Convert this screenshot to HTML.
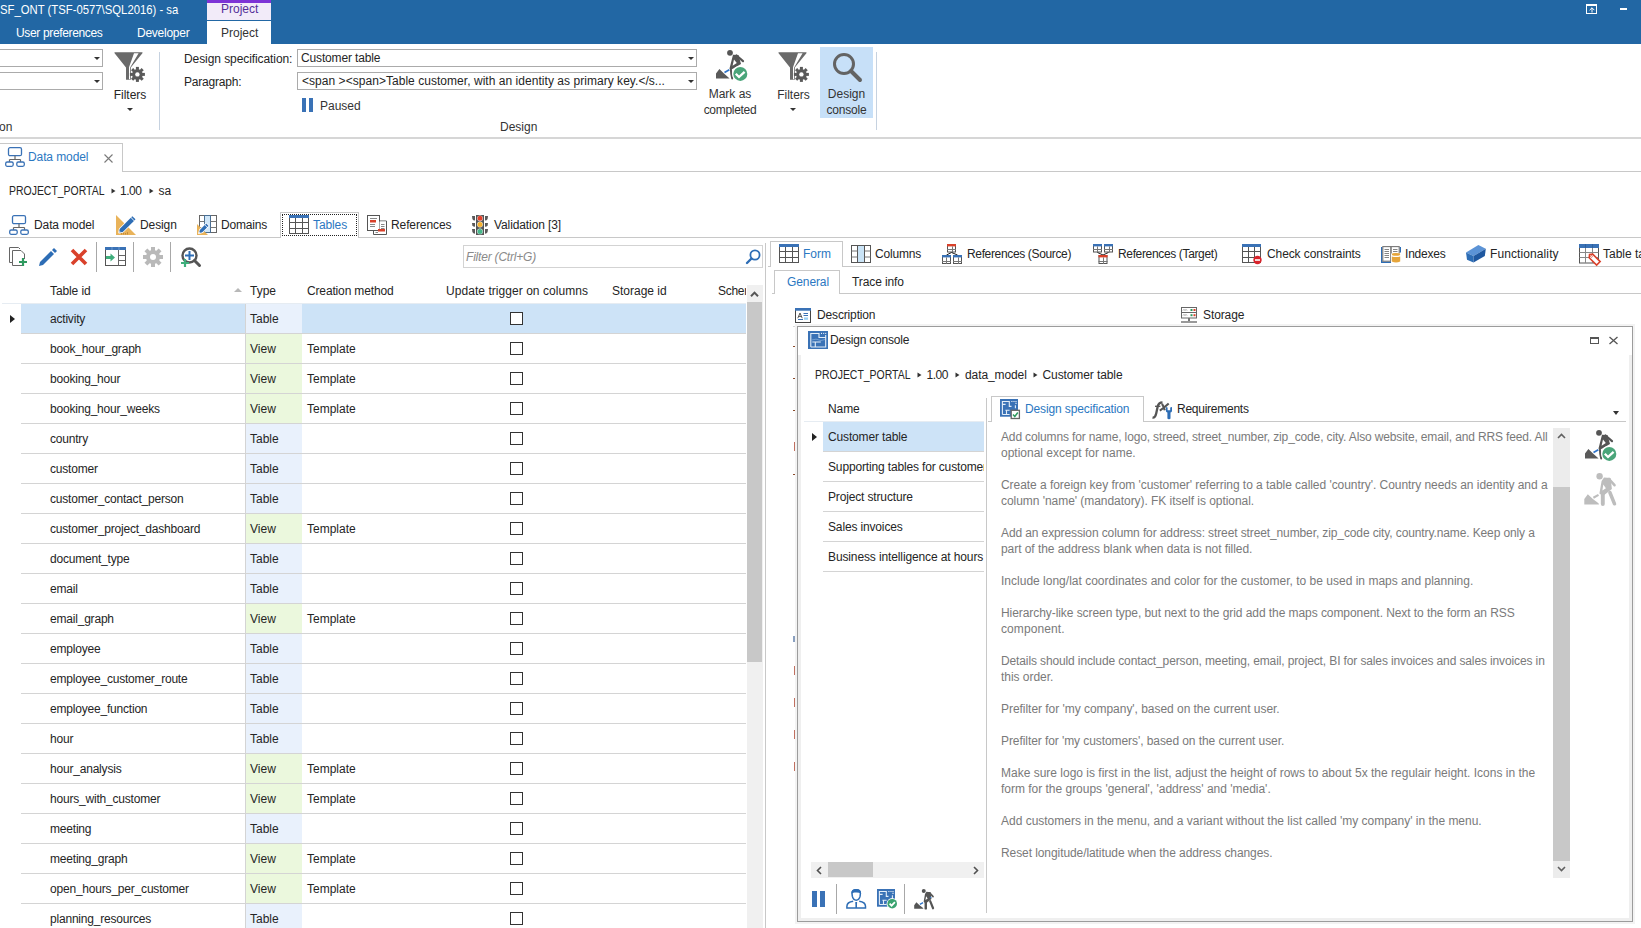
<!DOCTYPE html>
<html><head><meta charset="utf-8">
<style>
*{box-sizing:border-box}
html,body{margin:0;padding:0}
body{width:1641px;height:928px;overflow:hidden;position:relative;background:#fff;font-family:"Liberation Sans",sans-serif;font-size:12px;color:#252525}
.a{position:absolute}
.t{position:absolute;white-space:nowrap;line-height:18px;height:18px}
.hl{position:absolute;height:1px;background:#d4d4d4}
.vl{position:absolute;width:1px;background:#d4d4d4}
.combo{position:absolute;border:1px solid #ababab;background:#fff}
.dd{position:absolute;width:0;height:0;border-left:3px solid transparent;border-right:3px solid transparent;border-top:3.5px solid #333}
svg{position:absolute;overflow:visible}
</style></head><body>

<!-- ===== Title bar ===== -->
<div class="a" style="left:0;top:0;width:1641px;height:44px;background:#2267a4"></div>
<div class="t" style="left:0;top:1px;color:#fff;font-size:13px;transform:scaleX(0.87);transform-origin:0 0">SF_ONT (TSF-0577\SQL2016) - sa</div>
<div class="a" style="left:207px;top:0;width:64px;height:20px;background:#f2ebf9;border-top:3.6px solid #7d33d6"></div>
<div class="t" style="left:221px;top:0px;color:#55309a">Project</div>
<div class="t" style="left:16px;top:24px;color:#fff;letter-spacing:-0.35px">User preferences</div>
<div class="t" style="left:137px;top:24px;color:#fff;letter-spacing:-0.25px">Developer</div>
<div class="a" style="left:207px;top:21px;width:64px;height:23px;background:#fff"></div>
<div class="t" style="left:221px;top:24px;color:#333">Project</div>
<!-- window icons -->
<div class="a" style="left:1586px;top:4px;width:11px;height:10px;border:1px solid #fff;border-top-width:2px"></div>
<svg style="left:1586px;top:4px" width="12" height="11" viewBox="0 0 12 11"><path d="M6 3.8 V8.5 M3.6 6.2 L6 3.8 L8.4 6.2" stroke="#fff" stroke-width="1" fill="none"/></svg>
<div class="a" style="left:1620px;top:8px;width:7px;height:2px;background:#fff"></div>

<!-- ===== Ribbon ===== -->
<div class="combo" style="left:-2px;top:49px;width:105px;height:18px"></div>
<div class="dd" style="left:94px;top:57px"></div>
<div class="combo" style="left:-2px;top:72px;width:105px;height:18px"></div>
<div class="dd" style="left:94px;top:80px"></div>
<!-- filters icon 1 -->
<svg style="left:114px;top:52px" width="32" height="30" viewBox="0 0 32 30">
 <path d="M0.8 0.2 H28.2 Q29 0.5 28.4 1.3 L16.8 15.6 V27.7 H12 V15.6 L0.6 1.3 Q0 0.5 0.8 0.2 Z" fill="#6a6a6a"/>
 <path d="M20 1.2 H24.6 L16 15.8 V27.2 H15 V15.2 Z" fill="#fff"/>
 <g transform="translate(23.4,22.4)"><circle r="5.3" fill="#5a5a5a"/><circle r="2.2" fill="#fff"/>
 <g fill="#5a5a5a"><rect x="-1.5" y="-7.5" width="3" height="3"/><rect x="-1.5" y="4.5" width="3" height="3"/><rect x="-7.5" y="-1.5" width="3" height="3"/><rect x="4.5" y="-1.5" width="3" height="3"/>
 <g transform="rotate(45)"><rect x="-1.5" y="-7.5" width="3" height="3"/><rect x="-1.5" y="4.5" width="3" height="3"/><rect x="-7.5" y="-1.5" width="3" height="3"/><rect x="4.5" y="-1.5" width="3" height="3"/></g></g></g>
</svg>
<div class="t" style="left:112px;top:86px;width:36px;text-align:center">Filters</div>
<div class="dd" style="left:126.5px;top:108px"></div>
<div class="t" style="left:-1px;top:118px;color:#333">on</div>
<div class="a" style="left:159px;top:52px;width:1px;height:78px;background:#c6d2e0"></div>

<div class="t" style="left:184px;top:50px;letter-spacing:-0.08px">Design specification:</div>
<div class="t" style="left:184px;top:73px;letter-spacing:-0.2px">Paragraph:</div>
<div class="combo" style="left:297px;top:49px;width:400px;height:18px"></div>
<div class="t" style="left:301px;top:49px;letter-spacing:-0.15px">Customer table</div>
<div class="dd" style="left:687.5px;top:57px"></div>
<div class="combo" style="left:297px;top:72px;width:400px;height:18px"></div>
<div class="t" style="left:302px;top:72px;letter-spacing:0.04px">&lt;span &gt;&lt;span&gt;Table customer, with an identity as primary key.&lt;/s...</div>
<div class="dd" style="left:687.5px;top:80px"></div>
<div class="a" style="left:302px;top:98px;width:4px;height:14px;background:#3a72b6"></div>
<div class="a" style="left:309px;top:98px;width:4px;height:14px;background:#3a72b6"></div>
<div class="t" style="left:320px;top:97px;color:#333">Paused</div>
<div class="t" style="left:500px;top:118px;color:#333">Design</div>

<!-- Mark as completed -->
<svg id="worker1" style="left:715px;top:50px" width="32" height="31" viewBox="0 0 32 31">
 <circle cx="15" cy="2.8" r="2.9" fill="#555"/>
 <path d="M21.5 5.5 L28 11.2" stroke="#555" stroke-width="2.2" stroke-linecap="round"/>
 <path d="M18 4.8 L23.5 5 L26 14 L16.5 19.5 L14.5 18.5 Z M19 9.5 L21.8 13 L17.6 15.8 Z" fill="#555" fill-rule="evenodd"/>
 <path d="M15.8 18.5 Q16 24 17.2 28.6" stroke="#555" stroke-width="2" fill="none" stroke-linecap="round"/>
 <path d="M1 28.6 L1 23.5 L4.4 19 L9 23.6 L14.6 28.6 Z" fill="#5a5a5a"/>
 <path d="M9.5 22.5 L14.3 19.8" stroke="#2f74c9" stroke-width="1.8"/>
 <circle cx="25.3" cy="23.9" r="8.2" fill="#fff"/>
 <circle cx="25.3" cy="23.9" r="7" fill="#4aa57a"/>
 <path d="M20.8 23.8 L24 27 L29.6 21.8" stroke="#fff" stroke-width="2.3" fill="none"/>
</svg>
<div class="t" style="left:700px;top:85px;width:60px;text-align:center;color:#333">Mark as</div>
<div class="t" style="left:697px;top:101px;width:66px;text-align:center;color:#333;letter-spacing:-0.3px">completed</div>
<!-- Filters 2 -->
<svg style="left:778px;top:52px" width="32" height="30" viewBox="0 0 32 30">
 <path d="M0.8 0.2 H28.2 Q29 0.5 28.4 1.3 L16.8 15.6 V27.7 H12 V15.6 L0.6 1.3 Q0 0.5 0.8 0.2 Z" fill="#6a6a6a"/>
 <path d="M20 1.2 H24.6 L16 15.8 V27.2 H15 V15.2 Z" fill="#fff"/>
 <g transform="translate(23.4,22.4)"><circle r="5.3" fill="#5a5a5a"/><circle r="2.2" fill="#fff"/>
 <g fill="#5a5a5a"><rect x="-1.5" y="-7.5" width="3" height="3"/><rect x="-1.5" y="4.5" width="3" height="3"/><rect x="-7.5" y="-1.5" width="3" height="3"/><rect x="4.5" y="-1.5" width="3" height="3"/>
 <g transform="rotate(45)"><rect x="-1.5" y="-7.5" width="3" height="3"/><rect x="-1.5" y="4.5" width="3" height="3"/><rect x="-7.5" y="-1.5" width="3" height="3"/><rect x="4.5" y="-1.5" width="3" height="3"/></g></g></g>
</svg>
<div class="t" style="left:775px;top:86px;width:37px;text-align:center;color:#333">Filters</div>
<div class="dd" style="left:790px;top:108px"></div>
<!-- Design console -->
<div class="a" style="left:820px;top:47px;width:53px;height:71px;background:#c7e0f8"></div>
<svg style="left:832px;top:52px" width="30" height="30" viewBox="0 0 30 30">
 <circle cx="12" cy="12" r="9.5" stroke="#636363" stroke-width="3" fill="none"/>
 <path d="M19 19 L28 28" stroke="#636363" stroke-width="4" stroke-linecap="round"/>
</svg>
<div class="t" style="left:820px;top:85px;width:53px;text-align:center;color:#333">Design</div>
<div class="t" style="left:820px;top:101px;width:53px;text-align:center;color:#333;letter-spacing:-0.2px">console</div>
<div class="a" style="left:876px;top:52px;width:1px;height:78px;background:#c6d2e0"></div>

<div class="a" style="left:0;top:137px;width:1641px;height:2px;background:#d6d6d6"></div>

<!-- ===== Document tab ===== -->
<div class="a" style="left:-1px;top:143px;width:124px;height:29px;border:1px solid #c8c8c8;border-bottom:none;background:#fff"></div>
<div class="hl" style="left:122px;top:171px;width:1519px;background:#c8c8c8"></div>
<svg style="left:5px;top:147px" width="20" height="20" viewBox="0 0 20 20">
 <g fill="none" stroke="#3a72b6" stroke-width="1.3">
 <rect x="3.5" y="0.7" width="13" height="8" rx="1.5"/>
 <path d="M10 8.7 V12.5 M4.5 12.5 H15.5 M4.5 12.5 V15 M15.5 12.5 V15" stroke="#666" stroke-width="1.2"/>
 <rect x="0.7" y="15" width="7.5" height="4.3" rx="1.5"/>
 <rect x="11.8" y="15" width="7.5" height="4.3" rx="1.5"/>
 </g>
</svg>
<div class="t" style="left:28px;top:148px;color:#2b78c2;letter-spacing:-0.1px">Data model</div>
<svg style="left:104px;top:154px" width="9" height="9" viewBox="0 0 9 9"><path d="M0.5 0.5 L8.5 8.5 M8.5 0.5 L0.5 8.5" stroke="#7a7a7a" stroke-width="1.1"/></svg>

<!-- breadcrumb -->
<div class="t" style="left:9px;top:182px;transform:scaleX(0.871);transform-origin:0 0">PROJECT_PORTAL</div><svg style="left:111px;top:188px" width="5" height="6" viewBox="0 0 5 6"><path d="M0.5 0.5 L4.5 3 L0.5 5.5 Z" fill="#333"/></svg><div class="t" style="left:120px;top:182px;letter-spacing:-0.5px">1.00</div><svg style="left:149px;top:188px" width="5" height="6" viewBox="0 0 5 6"><path d="M0.5 0.5 L4.5 3 L0.5 5.5 Z" fill="#333"/></svg><div class="t" style="left:158.5px;top:182px">sa</div>

<!-- ===== Tab bar ===== -->
<div class="hl" style="left:0;top:237px;width:765px;background:#c8c8c8"></div>
<div class="hl" style="left:765px;top:237px;width:876px;background:#c8c8c8"></div>
<svg style="left:9px;top:215px" width="20" height="20" viewBox="0 0 20 20">
 <g fill="none" stroke="#3a72b6" stroke-width="1.3">
 <rect x="3.5" y="0.7" width="13" height="8" rx="1.5"/>
 <path d="M10 8.7 V12.5 M4.5 12.5 H15.5 M4.5 12.5 V15 M15.5 12.5 V15" stroke="#666" stroke-width="1.2"/>
 <rect x="0.7" y="15" width="7.5" height="4.3" rx="1.5"/>
 <rect x="11.8" y="15" width="7.5" height="4.3" rx="1.5"/>
 </g>
</svg>
<div class="t" style="left:34px;top:216px;letter-spacing:-0.1px">Data model</div>
<svg style="left:116px;top:215px" width="20" height="20" viewBox="0 0 20 20">
 <path d="M0 0 L20 20 H0 Z" fill="#e9b35a"/>
 <path d="M5.5 19.5 V18 M7.5 19.5 V17.2 M9.5 19.5 V18 M11.5 19.5 V17.2" stroke="#b98032" stroke-width="0.8"/>
 <g transform="translate(10.5 10.2) rotate(-45)"><path d="M-7.5 -2.2 H8.3 V2.2 H-7.5 L-10.5 0 Z M8.9 -2.2 H10.5 V2.2 H8.9 Z" fill="none" stroke="#fff" stroke-width="1.6" stroke-linejoin="round"/><path d="M-7.5 -2.2 H8.3 V2.2 H-7.5 L-10.5 0 Z" fill="#2d6db5"/><path d="M8.9 -2.2 H10.5 V2.2 H8.9 Z" fill="#2d6db5"/><path d="M-10.5 0 L-9.0 -0.7 V0.7 Z" fill="#fff"/></g>
</svg>
<div class="t" style="left:140px;top:216px;letter-spacing:-0.1px">Design</div>
<svg style="left:197px;top:215px" width="21" height="20" viewBox="0 0 21 20">
 <rect x="2.5" y="0.5" width="17" height="17" fill="#fff" stroke="#666"/>
 <rect x="7.5" y="0.5" width="6" height="17" fill="#cfe6f8" stroke="#4a6f94"/>
 <path d="M2.5 6.5 H7.5 M2.5 12.5 H7.5 M13.5 6.5 H19.5 M13.5 12.5 H19.5" stroke="#777"/>
 <path d="M0 9 L11 20 H0 Z" fill="#e9b35a"/>
 <g transform="translate(6.2 14) rotate(-45)"><path d="M-3.0 -1.7 H3.8 V1.7 H-3.0 L-6.0 0 Z M4.4 -1.7 H6.0 V1.7 H4.4 Z" fill="none" stroke="#fff" stroke-width="1.6" stroke-linejoin="round"/><path d="M-3.0 -1.7 H3.8 V1.7 H-3.0 L-6.0 0 Z" fill="#2d6db5"/><path d="M4.4 -1.7 H6.0 V1.7 H4.4 Z" fill="#2d6db5"/><path d="M-6.0 0 L-4.5 -0.7 V0.7 Z" fill="#fff"/></g>
</svg>
<div class="t" style="left:221px;top:216px;letter-spacing:-0.2px">Domains</div>
<!-- Tables selected tab -->
<div class="a" style="left:280px;top:212px;width:79px;height:26px;border:1px solid #c8c8c8;border-bottom:none;background:#fff"></div>
<div class="a" style="left:282px;top:214px;width:75px;height:22px;border:1px dotted #222"></div>
<svg style="left:289px;top:215px" width="20" height="19" viewBox="0 0 20 19">
 <rect x="0.5" y="0.5" width="19" height="18" fill="#fff" stroke="#555"/>
 <rect x="0" y="0" width="20" height="3" fill="#3a72b6"/>
 <path d="M0.5 7.5 H19.5 M0.5 13.5 H19.5 M6.5 3 V18.5 M13.5 3 V18.5" stroke="#555"/>
</svg>
<div class="t" style="left:313px;top:216px;color:#2b78c2;letter-spacing:-0.1px">Tables</div>
<svg style="left:367px;top:215px" width="21" height="20" viewBox="0 0 21 20">
 <rect x="0.5" y="0.5" width="12" height="15" fill="#fff" stroke="#555"/>
 <path d="M3 3.5 H10 M3 9.5 H8 M3 11.5 H8" stroke="#888"/>
 <rect x="3" y="5" width="6" height="2.5" fill="#d9412b"/>
 <path d="M6.5 16 V19.5 H19.5 V6 H12.5" stroke="#555" fill="none"/>
 <rect x="12.5" y="6.5" width="6.5" height="12.5" fill="#fff"/>
 <path d="M14 9.5 H17.5 M14 11.5 H17.5 M14 13.5 H17.5" stroke="#888"/>
 <rect x="11" y="14" width="7" height="2.5" fill="#d9412b"/>
 <path d="M8.5 17.5 H11" stroke="#888"/>
</svg>
<div class="t" style="left:391px;top:216px;letter-spacing:-0.1px">References</div>
<svg style="left:472px;top:215px" width="16" height="20" viewBox="0 0 16 20">
 <rect x="4" y="0" width="8" height="20" fill="#555"/>
 <g fill="#5a5a5a"><path d="M0 1 H3 V5.6 Q1 5.6 0.4 4 Z"/><path d="M0 8 H3 V11.8 Q1 11.8 0.4 10.5 Z"/><path d="M0 14 H3 V18.8 Q1 18.8 0.4 17 Z"/>
 <path d="M16 1 H13 V5.6 Q15 5.6 15.6 4 Z"/><path d="M16 8 H13 V11.8 Q15 11.8 15.6 10.5 Z"/><path d="M16 14 H13 V18.8 Q15 18.8 15.6 17 Z"/></g>
 <circle cx="8" cy="3.3" r="2.9" fill="#eef3f3"/><circle cx="8" cy="3.3" r="2.5" fill="#e0432e"/>
 <circle cx="8" cy="9.5" r="2.9" fill="#eef3f3"/><circle cx="8" cy="9.5" r="2.5" fill="#f6b12f"/>
 <circle cx="8" cy="16.4" r="2.9" fill="#eef3f3"/><circle cx="8" cy="16.4" r="2.5" fill="#48b88b"/>
</svg>
<div class="t" style="left:494px;top:216px;letter-spacing:-0.1px">Validation [3]</div>

<!-- ===== Toolbar ===== -->
<svg style="left:9px;top:247px" width="18" height="19" viewBox="0 0 18 19">
 <path d="M3.5 3.5 V18.5 H13 M0.5 0.5 H9.5 L11 2" stroke="#666" fill="none"/>
 <path d="M0.5 0.5 V15.5 H3.5" stroke="#666" fill="none"/>
 <path d="M3.5 3.5 H12 L15.5 7 V12" stroke="#666" fill="none"/>
 <path d="M14 11 V19 M10 15 H18" stroke="#2e9a5f" stroke-width="2.2"/>
</svg>
<svg style="left:39px;top:248px" width="18" height="18" viewBox="0 0 18 18">
 <path d="M0 18 L1 14 L12 3 L15 6 L4 17 Z" fill="#2d6db5"/>
 <path d="M13 2 L15 0 L18 3 L16 5 Z" fill="#2d6db5"/>
</svg>
<svg style="left:70px;top:248px" width="18" height="18" viewBox="0 0 18 18">
 <path d="M2 2 L16 16 M16 2 L2 16" stroke="#d9412b" stroke-width="3.6"/>
</svg>
<div class="vl" style="left:96px;top:242px;height:30px;background:#a8a8a8"></div>
<svg style="left:105px;top:247px" width="21" height="19" viewBox="0 0 21 19">
 <rect x="0.5" y="0.5" width="20" height="18" fill="#fff" stroke="#555"/>
 <rect x="0" y="0" width="21" height="3" fill="#3a72b6"/>
 <path d="M7 0 V3 M14 0 V3" stroke="#7aa3d6" stroke-width="0.8"/>
 <path d="M13.5 8.5 H20.5 M13.5 13.5 H20.5 M13.5 3 V18.5" stroke="#666"/>
 <path d="M1 9 H5.5 V6.5 L10 10.5 L5.5 14.5 V12 H1 Z" fill="#3fae7c"/>
</svg>
<div class="vl" style="left:133px;top:242px;height:30px;background:#a8a8a8"></div>
<svg style="left:143px;top:247px" width="20" height="20" viewBox="-10 -10 20 20">
 <circle r="7" fill="#b9b9b9"/><circle r="3" fill="#fff"/>
 <g fill="#b9b9b9"><rect x="-2" y="-10" width="4" height="4"/><rect x="-2" y="6" width="4" height="4"/><rect x="-10" y="-2" width="4" height="4"/><rect x="6" y="-2" width="4" height="4"/>
 <g transform="rotate(45)"><rect x="-2" y="-10" width="4" height="4"/><rect x="-2" y="6" width="4" height="4"/><rect x="-10" y="-2" width="4" height="4"/><rect x="6" y="-2" width="4" height="4"/></g></g>
</svg>
<div class="vl" style="left:170px;top:242px;height:30px;background:#a8a8a8"></div>
<svg style="left:180px;top:247px" width="21" height="20" viewBox="0 0 21 20">
 <circle cx="9.5" cy="8.5" r="7" fill="none" stroke="#555" stroke-width="2.4"/>
 <path d="M14.5 13.5 L19.5 18.5" stroke="#555" stroke-width="3" stroke-linecap="round"/>
 <path d="M9.5 4 V13 M5 8.5 H14" stroke="#2d6db5" stroke-width="2"/>
 <path d="M5 12 V20 M1 16 H9" stroke="#3fae7c" stroke-width="2.2"/>
</svg>
<!-- filter box -->
<div class="a" style="left:463px;top:245px;width:300px;height:23px;border:1px solid #d3d3d3"></div>
<div class="t" style="left:466px;top:248px;color:#8a8a8a;font-style:italic;letter-spacing:-0.2px">Filter (Ctrl+G)</div>
<svg style="left:746px;top:249px" width="15" height="15" viewBox="0 0 15 15">
 <circle cx="9" cy="6" r="4.6" fill="none" stroke="#2d6db5" stroke-width="1.8"/>
 <path d="M5.5 9.5 L1 14" stroke="#2d6db5" stroke-width="2.4" stroke-linecap="round"/>
</svg>

<!-- ===== Grid ===== -->
<div class="t" style="left:50px;top:282px;letter-spacing:-0.1px">Table id</div>
<div class="a" style="left:234px;top:288px;width:0;height:0;border-left:4px solid transparent;border-right:4px solid transparent;border-bottom:4px solid #b8b8b8"></div>
<div class="t" style="left:250px;top:282px">Type</div>
<div class="t" style="left:307px;top:282px;letter-spacing:-0.15px">Creation method</div>
<div class="t" style="left:446px;top:282px;letter-spacing:0.05px">Update trigger on columns</div>
<div class="t" style="left:612px;top:282px">Storage id</div>
<div class="a" style="left:718px;top:283px;width:28px;height:16px;overflow:hidden;white-space:nowrap;line-height:16px;letter-spacing:-0.3px">Schema</div>
<div class="hl" style="left:2px;top:303px;width:744px;background:#e6ecf2"></div>
<div class="a" style="left:10px;top:315px;width:0;height:0;border-top:4.5px solid transparent;border-bottom:4.5px solid transparent;border-left:5px solid #222"></div>
<div class="a" style="left:21px;top:304px;width:725px;height:29px;background:#cde3f7"></div>
<div class="a" style="left:246px;top:304px;width:56px;height:29px;background:#e9f1fc"></div>
<div class="hl" style="left:21px;top:333px;width:725px"></div>
<div class="t" style="left:50px;top:310px;letter-spacing:-0.2px">activity</div>
<div class="t" style="left:250px;top:310px">Table</div>
<div class="a" style="left:510px;top:312px;width:13px;height:13px;border:1px solid #333;background:#fff"></div>
<div class="a" style="left:21px;top:334px;width:725px;height:29px;background:#fff"></div>
<div class="a" style="left:246px;top:334px;width:56px;height:29px;background:#ebf8dd"></div>
<div class="hl" style="left:21px;top:363px;width:725px"></div>
<div class="t" style="left:50px;top:340px;letter-spacing:-0.2px">book_hour_graph</div>
<div class="t" style="left:250px;top:340px">View</div>
<div class="t" style="left:307px;top:340px">Template</div>
<div class="a" style="left:510px;top:342px;width:13px;height:13px;border:1px solid #333;background:#fff"></div>
<div class="a" style="left:21px;top:364px;width:725px;height:29px;background:#fff"></div>
<div class="a" style="left:246px;top:364px;width:56px;height:29px;background:#ebf8dd"></div>
<div class="hl" style="left:21px;top:393px;width:725px"></div>
<div class="t" style="left:50px;top:370px;letter-spacing:-0.2px">booking_hour</div>
<div class="t" style="left:250px;top:370px">View</div>
<div class="t" style="left:307px;top:370px">Template</div>
<div class="a" style="left:510px;top:372px;width:13px;height:13px;border:1px solid #333;background:#fff"></div>
<div class="a" style="left:21px;top:394px;width:725px;height:29px;background:#fff"></div>
<div class="a" style="left:246px;top:394px;width:56px;height:29px;background:#ebf8dd"></div>
<div class="hl" style="left:21px;top:423px;width:725px"></div>
<div class="t" style="left:50px;top:400px;letter-spacing:-0.2px">booking_hour_weeks</div>
<div class="t" style="left:250px;top:400px">View</div>
<div class="t" style="left:307px;top:400px">Template</div>
<div class="a" style="left:510px;top:402px;width:13px;height:13px;border:1px solid #333;background:#fff"></div>
<div class="a" style="left:21px;top:424px;width:725px;height:29px;background:#fff"></div>
<div class="a" style="left:246px;top:424px;width:56px;height:29px;background:#e9f1fc"></div>
<div class="hl" style="left:21px;top:453px;width:725px"></div>
<div class="t" style="left:50px;top:430px;letter-spacing:-0.2px">country</div>
<div class="t" style="left:250px;top:430px">Table</div>
<div class="a" style="left:510px;top:432px;width:13px;height:13px;border:1px solid #333;background:#fff"></div>
<div class="a" style="left:21px;top:454px;width:725px;height:29px;background:#fff"></div>
<div class="a" style="left:246px;top:454px;width:56px;height:29px;background:#e9f1fc"></div>
<div class="hl" style="left:21px;top:483px;width:725px"></div>
<div class="t" style="left:50px;top:460px;letter-spacing:-0.2px">customer</div>
<div class="t" style="left:250px;top:460px">Table</div>
<div class="a" style="left:510px;top:462px;width:13px;height:13px;border:1px solid #333;background:#fff"></div>
<div class="a" style="left:21px;top:484px;width:725px;height:29px;background:#fff"></div>
<div class="a" style="left:246px;top:484px;width:56px;height:29px;background:#e9f1fc"></div>
<div class="hl" style="left:21px;top:513px;width:725px"></div>
<div class="t" style="left:50px;top:490px;letter-spacing:-0.2px">customer_contact_person</div>
<div class="t" style="left:250px;top:490px">Table</div>
<div class="a" style="left:510px;top:492px;width:13px;height:13px;border:1px solid #333;background:#fff"></div>
<div class="a" style="left:21px;top:514px;width:725px;height:29px;background:#fff"></div>
<div class="a" style="left:246px;top:514px;width:56px;height:29px;background:#ebf8dd"></div>
<div class="hl" style="left:21px;top:543px;width:725px"></div>
<div class="t" style="left:50px;top:520px;letter-spacing:-0.2px">customer_project_dashboard</div>
<div class="t" style="left:250px;top:520px">View</div>
<div class="t" style="left:307px;top:520px">Template</div>
<div class="a" style="left:510px;top:522px;width:13px;height:13px;border:1px solid #333;background:#fff"></div>
<div class="a" style="left:21px;top:544px;width:725px;height:29px;background:#fff"></div>
<div class="a" style="left:246px;top:544px;width:56px;height:29px;background:#e9f1fc"></div>
<div class="hl" style="left:21px;top:573px;width:725px"></div>
<div class="t" style="left:50px;top:550px;letter-spacing:-0.2px">document_type</div>
<div class="t" style="left:250px;top:550px">Table</div>
<div class="a" style="left:510px;top:552px;width:13px;height:13px;border:1px solid #333;background:#fff"></div>
<div class="a" style="left:21px;top:574px;width:725px;height:29px;background:#fff"></div>
<div class="a" style="left:246px;top:574px;width:56px;height:29px;background:#e9f1fc"></div>
<div class="hl" style="left:21px;top:603px;width:725px"></div>
<div class="t" style="left:50px;top:580px;letter-spacing:-0.2px">email</div>
<div class="t" style="left:250px;top:580px">Table</div>
<div class="a" style="left:510px;top:582px;width:13px;height:13px;border:1px solid #333;background:#fff"></div>
<div class="a" style="left:21px;top:604px;width:725px;height:29px;background:#fff"></div>
<div class="a" style="left:246px;top:604px;width:56px;height:29px;background:#ebf8dd"></div>
<div class="hl" style="left:21px;top:633px;width:725px"></div>
<div class="t" style="left:50px;top:610px;letter-spacing:-0.2px">email_graph</div>
<div class="t" style="left:250px;top:610px">View</div>
<div class="t" style="left:307px;top:610px">Template</div>
<div class="a" style="left:510px;top:612px;width:13px;height:13px;border:1px solid #333;background:#fff"></div>
<div class="a" style="left:21px;top:634px;width:725px;height:29px;background:#fff"></div>
<div class="a" style="left:246px;top:634px;width:56px;height:29px;background:#e9f1fc"></div>
<div class="hl" style="left:21px;top:663px;width:725px"></div>
<div class="t" style="left:50px;top:640px;letter-spacing:-0.2px">employee</div>
<div class="t" style="left:250px;top:640px">Table</div>
<div class="a" style="left:510px;top:642px;width:13px;height:13px;border:1px solid #333;background:#fff"></div>
<div class="a" style="left:21px;top:664px;width:725px;height:29px;background:#fff"></div>
<div class="a" style="left:246px;top:664px;width:56px;height:29px;background:#e9f1fc"></div>
<div class="hl" style="left:21px;top:693px;width:725px"></div>
<div class="t" style="left:50px;top:670px;letter-spacing:-0.2px">employee_customer_route</div>
<div class="t" style="left:250px;top:670px">Table</div>
<div class="a" style="left:510px;top:672px;width:13px;height:13px;border:1px solid #333;background:#fff"></div>
<div class="a" style="left:21px;top:694px;width:725px;height:29px;background:#fff"></div>
<div class="a" style="left:246px;top:694px;width:56px;height:29px;background:#e9f1fc"></div>
<div class="hl" style="left:21px;top:723px;width:725px"></div>
<div class="t" style="left:50px;top:700px;letter-spacing:-0.2px">employee_function</div>
<div class="t" style="left:250px;top:700px">Table</div>
<div class="a" style="left:510px;top:702px;width:13px;height:13px;border:1px solid #333;background:#fff"></div>
<div class="a" style="left:21px;top:724px;width:725px;height:29px;background:#fff"></div>
<div class="a" style="left:246px;top:724px;width:56px;height:29px;background:#e9f1fc"></div>
<div class="hl" style="left:21px;top:753px;width:725px"></div>
<div class="t" style="left:50px;top:730px;letter-spacing:-0.2px">hour</div>
<div class="t" style="left:250px;top:730px">Table</div>
<div class="a" style="left:510px;top:732px;width:13px;height:13px;border:1px solid #333;background:#fff"></div>
<div class="a" style="left:21px;top:754px;width:725px;height:29px;background:#fff"></div>
<div class="a" style="left:246px;top:754px;width:56px;height:29px;background:#ebf8dd"></div>
<div class="hl" style="left:21px;top:783px;width:725px"></div>
<div class="t" style="left:50px;top:760px;letter-spacing:-0.2px">hour_analysis</div>
<div class="t" style="left:250px;top:760px">View</div>
<div class="t" style="left:307px;top:760px">Template</div>
<div class="a" style="left:510px;top:762px;width:13px;height:13px;border:1px solid #333;background:#fff"></div>
<div class="a" style="left:21px;top:784px;width:725px;height:29px;background:#fff"></div>
<div class="a" style="left:246px;top:784px;width:56px;height:29px;background:#ebf8dd"></div>
<div class="hl" style="left:21px;top:813px;width:725px"></div>
<div class="t" style="left:50px;top:790px;letter-spacing:-0.2px">hours_with_customer</div>
<div class="t" style="left:250px;top:790px">View</div>
<div class="t" style="left:307px;top:790px">Template</div>
<div class="a" style="left:510px;top:792px;width:13px;height:13px;border:1px solid #333;background:#fff"></div>
<div class="a" style="left:21px;top:814px;width:725px;height:29px;background:#fff"></div>
<div class="a" style="left:246px;top:814px;width:56px;height:29px;background:#e9f1fc"></div>
<div class="hl" style="left:21px;top:843px;width:725px"></div>
<div class="t" style="left:50px;top:820px;letter-spacing:-0.2px">meeting</div>
<div class="t" style="left:250px;top:820px">Table</div>
<div class="a" style="left:510px;top:822px;width:13px;height:13px;border:1px solid #333;background:#fff"></div>
<div class="a" style="left:21px;top:844px;width:725px;height:29px;background:#fff"></div>
<div class="a" style="left:246px;top:844px;width:56px;height:29px;background:#ebf8dd"></div>
<div class="hl" style="left:21px;top:873px;width:725px"></div>
<div class="t" style="left:50px;top:850px;letter-spacing:-0.2px">meeting_graph</div>
<div class="t" style="left:250px;top:850px">View</div>
<div class="t" style="left:307px;top:850px">Template</div>
<div class="a" style="left:510px;top:852px;width:13px;height:13px;border:1px solid #333;background:#fff"></div>
<div class="a" style="left:21px;top:874px;width:725px;height:29px;background:#fff"></div>
<div class="a" style="left:246px;top:874px;width:56px;height:29px;background:#ebf8dd"></div>
<div class="hl" style="left:21px;top:903px;width:725px"></div>
<div class="t" style="left:50px;top:880px;letter-spacing:-0.2px">open_hours_per_customer</div>
<div class="t" style="left:250px;top:880px">View</div>
<div class="t" style="left:307px;top:880px">Template</div>
<div class="a" style="left:510px;top:882px;width:13px;height:13px;border:1px solid #333;background:#fff"></div>
<div class="a" style="left:21px;top:904px;width:725px;height:29px;background:#fff"></div>
<div class="a" style="left:246px;top:904px;width:56px;height:29px;background:#e9f1fc"></div>
<div class="hl" style="left:21px;top:933px;width:725px"></div>
<div class="t" style="left:50px;top:910px;letter-spacing:-0.2px">planning_resources</div>
<div class="t" style="left:250px;top:910px">Table</div>
<div class="a" style="left:510px;top:912px;width:13px;height:13px;border:1px solid #333;background:#fff"></div>
<div class="vl" style="left:245px;top:304px;height:624px"></div>
<!-- scrollbar -->
<div class="a" style="left:747px;top:285px;width:16px;height:643px;background:#f0f0f0"></div>
<div class="a" style="left:747px;top:302px;width:15px;height:360px;background:#c8c8c8"></div>
<svg style="left:750px;top:291px" width="9" height="6" viewBox="0 0 9 6"><path d="M1 5.2 L4.5 1.6 L8 5.2" stroke="#555" stroke-width="2" fill="none"/></svg>
<div class="vl" style="left:765px;top:243px;height:685px;background:#c8c8c8"></div>

<!-- ===== Right panel ===== -->
<!-- tab strip -->
<div class="hl" style="left:842px;top:266px;width:799px;background:#c8c8c8"></div>
<div class="hl" style="left:768px;top:266px;width:3px;background:#c8c8c8"></div>
<div class="a" style="left:770px;top:241px;width:73px;height:26px;border:1px solid #c8c8c8;border-bottom:none;background:#fff"></div>
<svg style="left:779px;top:244px" width="20" height="19" viewBox="0 0 20 19">
 <rect x="0.5" y="0.5" width="19" height="18" fill="#fff" stroke="#555"/>
 <rect x="0" y="0" width="20" height="3" fill="#3a72b6"/>
 <path d="M0.5 7.5 H19.5 M0.5 13.5 H19.5 M6.5 3 V18.5 M13.5 3 V18.5" stroke="#555"/>
</svg>
<div class="t" style="left:803px;top:245px;color:#2b78c2">Form</div>
<svg style="left:851px;top:245px" width="20" height="18" viewBox="0 0 20 18">
 <rect x="0.5" y="0.5" width="19" height="17" fill="#fff" stroke="#555"/>
 <rect x="6.5" y="0.5" width="7" height="17" fill="#c9e3f6" stroke="#555"/>
 <path d="M0.5 6 H6.5 M0.5 12 H6.5 M13.5 6 H19.5 M13.5 12 H19.5" stroke="#777"/>
</svg>
<div class="t" style="left:875px;top:245px;letter-spacing:-0.2px">Columns</div>
<svg style="left:942px;top:244px" width="20" height="20" viewBox="0 0 20 20">
 <rect x="5.5" y="0.5" width="8" height="7.5" fill="#fff" stroke="#555"/><rect x="5" y="0" width="9" height="2.4" fill="#d9412b"/><path d="M10.5 2.4 V8.5 M5 5.5 H14" stroke="#777" stroke-width="1"/>
 <path d="M9.5 8.5 L4.5 11 M9.5 8.5 L15.5 11" stroke="#222"/>
 <rect x="0.5" y="11.5" width="8" height="8" fill="#fff" stroke="#555"/><rect x="0" y="11" width="9" height="2.4" fill="#3a72b6"/><path d="M4.5 13.4 V20 M0 17.5 H9" stroke="#777" stroke-width="1"/>
 <rect x="11.5" y="11.5" width="8" height="8" fill="#fff" stroke="#555"/><rect x="11" y="11" width="9" height="2.4" fill="#3a72b6"/><path d="M16.5 13.4 V20 M11 17.5 H20" stroke="#777" stroke-width="1"/>
</svg>
<div class="t" style="left:967px;top:245px;letter-spacing:-0.35px">References (Source)</div>
<svg style="left:1093px;top:244px" width="20" height="20" viewBox="0 0 20 20">
 <rect x="0.5" y="0.5" width="8" height="7.5" fill="#fff" stroke="#555"/><rect x="0" y="0" width="9" height="2.4" fill="#3a72b6"/><path d="M4.5 2.4 V8.5 M0 5.5 H9" stroke="#777" stroke-width="1"/>
 <rect x="11.5" y="0.5" width="8" height="7.5" fill="#fff" stroke="#555"/><rect x="11" y="0" width="9" height="2.4" fill="#3a72b6"/><path d="M16.5 2.4 V8.5 M11 5.5 H20" stroke="#777" stroke-width="1"/>
 <path d="M4.5 8.5 L10 11 M15.5 8.5 L10 11" stroke="#222"/>
 <rect x="6.0" y="11.5" width="8" height="8" fill="#fff" stroke="#555"/><rect x="5.5" y="11" width="9" height="2.4" fill="#d9412b"/><path d="M10.5 13.4 V20 M5.5 17.5 H14.5" stroke="#777" stroke-width="1"/>
</svg>
<div class="t" style="left:1118px;top:245px;letter-spacing:-0.35px">References (Target)</div>
<svg style="left:1242px;top:244px" width="20" height="20" viewBox="0 0 20 20">
 <rect x="0.5" y="0.5" width="18" height="18" fill="#fff" stroke="#555"/>
 <rect x="0" y="0" width="19" height="3" fill="#3a72b6"/>
 <path d="M0.5 7.5 H18.5 M0.5 13.5 H18.5 M6.5 3 V18.5 M12.5 3 V18.5" stroke="#555"/>
 <circle cx="15.5" cy="16" r="4.2" fill="#d9232b"/><path d="M13 16 H18" stroke="#fff" stroke-width="1.6"/>
</svg>
<div class="t" style="left:1267px;top:245px;letter-spacing:-0.1px">Check constraints</div>
<svg style="left:1381px;top:246px" width="20" height="17" viewBox="0 0 20 17">
 <path d="M0.7 1 V16.3 H10" stroke="#2d6db5" stroke-width="1.4" fill="none"/>
 <path d="M19.3 1 V6.5" stroke="#2d6db5" stroke-width="1.4"/>
 <rect x="1.8" y="0.6" width="8" height="14.6" fill="#fff" stroke="#777" stroke-width="1.1"/>
 <rect x="10.2" y="0.6" width="8" height="14.6" fill="#fff" stroke="#777" stroke-width="1.1"/>
 <path d="M3.5 3.5 H8 M3.5 5.5 H8 M3.5 7.5 H8 M3.5 9.5 H8 M3.5 11.5 H8 M12 3.5 H16.5 M12 5.5 H16.5" stroke="#777" stroke-width="0.9"/>
 <rect x="10" y="7.5" width="10" height="9.5" fill="#fff"/>
 <ellipse cx="15" cy="8.4" rx="4.2" ry="1.4" fill="#e6a53a"/>
 <path d="M10.8 10.4 Q15 11.8 19.2 10.4 V15.6 Q15 17.4 10.8 15.6 Z" fill="#e6a53a"/>
</svg>
<div class="t" style="left:1405px;top:245px;letter-spacing:-0.2px">Indexes</div>
<svg style="left:1466px;top:245px" width="20" height="18" viewBox="0 0 20 18">
 <path d="M0 7.4 L12.4 0 L19.8 3.7 L7.5 11.1 Z" fill="#5b93d6"/>
 <path d="M0 7.4 L7.5 11.1 V17.5 L1 14.8 Z" fill="#2d6db5"/>
 <path d="M7.5 11.1 L19.8 3.7 L18.8 11.1 L7.5 17.5 Z" fill="#1f58a0"/>
</svg>
<div class="t" style="left:1490px;top:245px;letter-spacing:0.1px">Functionality</div>
<svg style="left:1579px;top:244px" width="21" height="21" viewBox="0 0 21 21">
 <rect x="0.5" y="0.5" width="19" height="18.5" fill="#fff" stroke="#555"/>
 <rect x="0" y="0" width="20" height="4" fill="#3a72b6"/>
 <path d="M6.5 0 V4 M13.5 0 V4" stroke="#2a5d9c" stroke-width="0.8"/>
 <path d="M0.5 8.5 H19.5 M0.5 13.5 H19.5 M6.5 4 V19 M13.5 4 V19" stroke="#888"/>
 <g transform="rotate(-45 15.5 15.5)"><path d="M13 10.5 L15.5 8.5 L18 10.5 V21 H13 Z" fill="#fff" stroke="#d9412b" stroke-width="1.6"/><circle cx="15.5" cy="11.2" r="0.9" fill="#fff" stroke="#d9412b" stroke-width="0.6"/></g>
</svg>
<div class="t" style="left:1603px;top:245px">Table tags</div>

<!-- General / Trace info -->
<div class="hl" style="left:839px;top:293px;width:802px;background:#c8c8c8"></div>
<div class="hl" style="left:772px;top:293px;width:3px;background:#c8c8c8"></div>
<div class="a" style="left:774px;top:270px;width:66px;height:24px;border:1px solid #c8c8c8;border-bottom:none;background:#fff"></div>
<div class="t" style="left:787px;top:273px;color:#2b78c2;letter-spacing:-0.1px">General</div>
<div class="t" style="left:852px;top:273px;letter-spacing:-0.1px">Trace info</div>

<!-- Description / Storage -->
<svg style="left:795px;top:308px" width="16" height="15" viewBox="0 0 16 15">
 <rect x="0.5" y="0.5" width="15" height="14" fill="#fff" stroke="#444"/>
 <rect x="0" y="0" width="16" height="2.7" fill="#3a72b6"/>
 <path d="M2.8 10.2 L5 5 L7.2 10.2 M3.7 8.4 H6.3" stroke="#555" stroke-width="1" fill="none"/>
 <rect x="3" y="11" width="5" height="1" fill="#3a72b6"/>
 <rect x="8.5" y="5" width="4.5" height="1" fill="#3a72b6"/>
 <rect x="8.5" y="7" width="4.5" height="1" fill="#3a72b6"/>
 <rect x="9" y="9.4" width="4" height="2.4" fill="#9fd0f0"/>
</svg>
<div class="t" style="left:817px;top:306px;letter-spacing:-0.15px">Description</div>
<svg style="left:1181px;top:307px" width="16" height="16" viewBox="0 0 16 16">
 <rect x="0.5" y="0.5" width="15" height="5" fill="#fff" stroke="#666"/>
 <rect x="0.5" y="5.5" width="15" height="5.5" fill="#fff" stroke="#666"/>
 <rect x="9.5" y="2" width="2" height="2" fill="#2e9a5f"/><rect x="12.5" y="2" width="2" height="2" fill="#d9412b"/>
 <rect x="9.5" y="7.2" width="2" height="2" fill="#2e9a5f"/><rect x="12.5" y="7.2" width="2" height="2" fill="#d9412b"/>
 <path d="M2 3.5 l1 -1 l1 1 l1 -1 l1 1 M2 8.5 l1 -1 l1 1 l1 -1 l1 1" stroke="#555" stroke-width="0.6" fill="none"/>
 <rect x="7" y="11" width="2" height="3" fill="#777"/>
 <rect x="0" y="14" width="16" height="2" fill="#999"/>
</svg>
<div class="t" style="left:1203px;top:306px;letter-spacing:-0.1px">Storage</div>
<div class="hl" style="left:793px;top:326px;width:5px;background:#d8d8d8"></div>
<!-- faint marks behind dialog -->
<div class="a" style="left:793px;top:346px;width:2px;height:1px;background:#8a4a2a"></div>
<div class="a" style="left:793px;top:378px;width:2px;height:1px;background:#8a4a2a"></div>
<div class="a" style="left:793px;top:410px;width:2px;height:1px;background:#8a4a2a"></div>
<div class="a" style="left:794px;top:442px;width:1px;height:9px;background:#c07060"></div>
<div class="a" style="left:793px;top:474px;width:2px;height:1px;background:#8a4a2a"></div>
<div class="a" style="left:793px;top:636px;width:2px;height:6px;background:#8aa0c0"></div>
<div class="a" style="left:794px;top:666px;width:1px;height:9px;background:#c07060"></div>
<div class="a" style="left:794px;top:698px;width:1px;height:9px;background:#c07060"></div>
<div class="a" style="left:794px;top:730px;width:1px;height:9px;background:#c07060"></div>
<div class="a" style="left:794px;top:762px;width:1px;height:9px;background:#c07060"></div>

<!-- ===== Design console dialog ===== -->
<div class="a" style="left:795px;top:324px;width:840px;height:600px;background:#f3f3f3"></div>
<div class="a" style="left:797px;top:326px;width:836px;height:596px;border:1px solid #9c9c9c;background:#fff"></div>
<div class="a" style="left:798px;top:355px;width:3px;height:566px;background:#efefef"></div>
<div class="a" style="left:798px;top:918px;width:834px;height:3px;background:#efefef"></div>
<div class="a" style="left:1629px;top:355px;width:3px;height:566px;background:#efefef"></div>

<svg style="left:808px;top:331px" width="20" height="18" viewBox="0 0 20 18">
 <rect x="0" y="0" width="20" height="18" fill="#3a72b6"/>
 <path d="M2.8 16 V2.5 H11 V6.5 H17.7 M17.7 4 V16 H2.8" stroke="#e4eef8" stroke-width="1.1" fill="none"/>
 <path d="M4.3 11 H12.8 M7.3 11 V16" stroke="#e4eef8" stroke-width="1.1"/>
 <path d="M3.5 9 L8 8.2 L13 9.5 L17 8.5" stroke="#7fa8d8" stroke-width="0.8" fill="none"/>
 <path d="M13 2.4 h1 M15.2 2.4 h1 M17.2 2.4 h1" stroke="#fff" stroke-width="1"/>
</svg>
<div class="t" style="left:830px;top:331px;letter-spacing:-0.2px">Design console</div>
<div class="a" style="left:1590px;top:337px;width:9px;height:7px;border:1px solid #555;border-top-width:2px"></div>
<svg style="left:1609px;top:337px" width="9" height="7" viewBox="0 0 9 7"><path d="M0.5 0 L8.5 7 M8.5 0 L0.5 7" stroke="#555" stroke-width="1.3"/></svg>

<div class="t" style="left:815px;top:366px;transform:scaleX(0.871);transform-origin:0 0">PROJECT_PORTAL</div><svg style="left:917px;top:372px" width="5" height="6" viewBox="0 0 5 6"><path d="M0.5 0.5 L4.5 3 L0.5 5.5 Z" fill="#333"/></svg><div class="t" style="left:926.5px;top:366px;letter-spacing:-0.5px">1.00</div><svg style="left:955px;top:372px" width="5" height="6" viewBox="0 0 5 6"><path d="M0.5 0.5 L4.5 3 L0.5 5.5 Z" fill="#333"/></svg><div class="t" style="left:965px;top:366px;letter-spacing:-0.1px">data_model</div><svg style="left:1033px;top:372px" width="5" height="6" viewBox="0 0 5 6"><path d="M0.5 0.5 L4.5 3 L0.5 5.5 Z" fill="#333"/></svg><div class="t" style="left:1042.5px;top:366px;letter-spacing:-0.1px">Customer table</div>

<!-- left list -->
<div class="t" style="left:828px;top:400px;letter-spacing:-0.1px">Name</div>
<div class="hl" style="left:804px;top:421px;width:180px;background:#e6ecf2"></div>
<div class="a" style="left:823px;top:422px;width:161px;height:29px;background:#cde3f7"></div>
<div class="a" style="left:812px;top:433px;width:0;height:0;border-top:4.5px solid transparent;border-bottom:4.5px solid transparent;border-left:5px solid #222"></div>
<div class="hl" style="left:823px;top:451px;width:161px"></div>
<div class="hl" style="left:823px;top:481px;width:161px"></div>
<div class="hl" style="left:823px;top:511px;width:161px"></div>
<div class="hl" style="left:823px;top:541px;width:161px"></div>
<div class="hl" style="left:823px;top:571px;width:161px"></div>
<div class="t" style="left:828px;top:428px;letter-spacing:-0.15px">Customer table</div>
<div class="a" style="left:828px;top:459px;width:156px;height:16px;overflow:hidden;white-space:nowrap;line-height:16px;letter-spacing:-0.15px">Supporting tables for customers</div>
<div class="t" style="left:828px;top:488px;letter-spacing:-0.15px">Project structure</div>
<div class="t" style="left:828px;top:518px;letter-spacing:-0.15px">Sales invoices</div>
<div class="a" style="left:828px;top:549px;width:156px;height:16px;overflow:hidden;white-space:nowrap;line-height:16px;letter-spacing:-0.12px">Business intelligence at hours</div>
<!-- h scrollbar -->
<div class="a" style="left:811px;top:862px;width:173px;height:16px;background:#f0f0f0"></div>
<div class="a" style="left:828px;top:862px;width:45px;height:15px;background:#c8c8c8"></div>
<svg style="left:816px;top:866px" width="6" height="9" viewBox="0 0 6 9"><path d="M5 1 L1.5 4.5 L5 8" stroke="#505050" stroke-width="1.6" fill="none"/></svg>
<svg style="left:973px;top:866px" width="6" height="9" viewBox="0 0 6 9"><path d="M1 1 L4.5 4.5 L1 8" stroke="#505050" stroke-width="1.6" fill="none"/></svg>
<div class="vl" style="left:986px;top:398px;height:515px;background:#c8c8c8"></div>
<!-- bottom toolbar -->
<div class="a" style="left:812px;top:891px;width:5px;height:16px;background:#3a72b6"></div>
<div class="a" style="left:820px;top:891px;width:5px;height:16px;background:#3a72b6"></div>
<div class="vl" style="left:836px;top:884px;height:30px;background:#a8a8a8"></div>
<svg style="left:846px;top:889px" width="21" height="20" viewBox="0 0 21 20">
 <path d="M6 4.5 Q6 0.8 10.2 0.8 Q14.4 0.8 14.4 4.5 L14.1 7.2 Q13.2 11.2 10.2 11.2 Q7.2 11.2 6.3 7.2 Z" fill="#fff" stroke="#2d6db5" stroke-width="1.5"/>
 <path d="M5.3 4.6 Q5.3 0.1 10.2 0.1 Q15.1 0.1 15.1 4.6 Q12.5 2.9 8.5 3.6 Q6.5 3.9 5.3 4.6 Z" fill="#2d6db5"/>
 <path d="M7.2 12.2 Q1 13 0.9 17.2 V18.9 H19.5 V17.2 Q19.4 13 13.2 12.2" fill="none" stroke="#2d6db5" stroke-width="1.5"/>
 <path d="M10.2 14 V18.9" stroke="#2d6db5" stroke-width="1.6"/>
 <rect x="9.3" y="13" width="1.8" height="1.3" fill="#2d6db5"/>
</svg>
<svg style="left:877px;top:889px" width="21" height="20" viewBox="0 0 21 20">
 <rect x="0" y="0" width="18" height="17.7" fill="#3a72b6"/>
 <g stroke="#e4eef8" stroke-width="1.1" fill="none">
 <path d="M2.4 15.5 V2.5 H9.3 V7.4 H11.5 M15.4 6.3 V9.3 M2.4 5.4 H5.6 M2.4 15.5 H9.6 M5.4 11.3 H9.6 M6.5 11.3 V15.5"/>
 </g>
 <path d="M11.4 2.5 h1 M13.5 2.5 h1 M15.5 2.5 h1 M15.5 4.4 h1" stroke="#fff" stroke-width="1.1"/>
 <circle cx="15.2" cy="14.7" r="5.6" fill="#fff"/>
 <circle cx="15.2" cy="14.7" r="4.8" fill="#3aa370"/>
 <path d="M12.6 14.6 L14.6 16.6 L17.9 13.2" stroke="#fff" stroke-width="1.8" fill="none"/>
</svg>
<div class="vl" style="left:904px;top:884px;height:30px;background:#a8a8a8"></div>
<svg style="left:914px;top:889px" width="20" height="20" viewBox="0 0 32 32">
 <circle cx="15.6" cy="3.2" r="3.2" fill="#555"/>
 <path d="M20 4.5 L26.6 5 L27.9 16.1 L19 23 L15.4 20.4 L17.6 7.9 Z M19.3 11.4 L21.9 15.3 L18.4 17.4 Z" fill="#555" fill-rule="evenodd"/>
 <path d="M25 6 L30.5 12.2" stroke="#555" stroke-width="2.6" stroke-linecap="round"/>
 <path d="M18.8 21 V31" stroke="#555" stroke-width="3.9" stroke-linecap="round"/>
 <path d="M25.9 19.5 L30.5 30.8" stroke="#555" stroke-width="3.5" stroke-linecap="round"/>
 <path d="M0.3 31.6 V26 L3.8 21.3 L8.9 26 L14.5 30.3 L15 31.6 Z" fill="#555"/>
 <path d="M9.4 24.7 L14.5 21.9" stroke="#2f74c9" stroke-width="2.2"/><circle cx="26.5" cy="13.5" r="1.3" fill="#2f74c9"/>
</svg>

<!-- right: tabs -->
<div class="hl" style="left:1144px;top:421px;width:482px;background:#c8c8c8"></div>
<div class="hl" style="left:988px;top:421px;width:4px;background:#c8c8c8"></div>
<div class="a" style="left:991px;top:396px;width:153px;height:26px;border:1px solid #c8c8c8;border-bottom:none;background:#fff"></div>
<svg style="left:1000px;top:399px" width="20" height="20" viewBox="0 0 20 20">
 <rect x="0" y="0" width="18" height="17.7" fill="#3a72b6"/>
 <g stroke="#e4eef8" stroke-width="1.1" fill="none">
 <path d="M2.4 15.5 V2.5 H9.3 V7.4 H11.5 M15.4 6.3 V9.3 M2.4 5.4 H5.6 M2.4 15.5 H9.6 M5.4 11.3 H9.6 M6.5 11.3 V15.5"/>
 </g>
 <path d="M11.4 2.5 h1 M13.5 2.5 h1 M15.5 2.5 h1 M15.5 4.4 h1" stroke="#fff" stroke-width="1.1"/>
 <rect x="11.2" y="11.3" width="8.2" height="8.2" fill="#fff" stroke="#666" stroke-width="1.3"/>
 <path d="M13 15.5 L14.8 17.5 L17.8 13.5" stroke="#2e9a5f" stroke-width="1.5" fill="none"/>
</svg>
<div class="t" style="left:1025px;top:400px;color:#2b78c2;letter-spacing:-0.12px">Design specification</div>
<svg style="left:1152px;top:399px" width="21" height="21" viewBox="0 0 21 21">
 <path d="M0.5 18.6 Q3.2 19 4.2 14.5 L5.8 7 Q6.6 3.6 10.5 3.4" stroke="#555" stroke-width="2.3" fill="none"/>
 <path d="M3 7.3 H8.4" stroke="#555" stroke-width="1.3"/>
 <path d="M7.8 11.6 Q12 9 16.7 4.6 M10 4.8 Q11.5 7 12.8 11.2" stroke="#555" stroke-width="2.1" fill="none"/>
 <path d="M13.9 7.9 L15.6 8.6 V11.3 H18.2 V8.6 L20 7.9 V11.8 Q20 13.2 18.5 13.6 V19.3 Q18.5 20.2 17 20.2 Q15.4 20.2 15.4 19.3 V13.6 Q13.9 13.2 13.9 11.8 Z" fill="#2d6db5"/>
</svg>
<div class="t" style="left:1177px;top:400px;letter-spacing:-0.25px">Requirements</div>
<div class="dd" style="left:1613px;top:411px;border-left-width:3.5px;border-right-width:3.5px;border-top-width:4px"></div>

<!-- spec text -->
<div class="a" style="left:1001px;top:429px;width:552px;height:440px;color:#7a7a7a">
<div class="a" style="left:0;top:0px;white-space:nowrap;line-height:16px;letter-spacing:-0.142px">Add columns for name, logo, streed, street_number, zip_code, city. Also website, email, and RRS feed. All</div>
<div class="a" style="left:0;top:16px;white-space:nowrap;line-height:16px;letter-spacing:-0.002px">optional except for name.</div>
<div class="a" style="left:0;top:48px;white-space:nowrap;line-height:16px;letter-spacing:-0.046px">Create a foreign key from 'customer' referring to a table called 'country'. Country needs an identity and a</div>
<div class="a" style="left:0;top:64px;white-space:nowrap;line-height:16px;letter-spacing:-0.046px">column 'name' (mandatory). FK itself is optional.</div>
<div class="a" style="left:0;top:96px;white-space:nowrap;line-height:16px;letter-spacing:-0.114px">Add an expression column for address: street street_number, zip_code city, country.name. Keep only a</div>
<div class="a" style="left:0;top:112px;white-space:nowrap;line-height:16px;letter-spacing:-0.057px">part of the address blank when data is not filled.</div>
<div class="a" style="left:0;top:144px;white-space:nowrap;line-height:16px;letter-spacing:0.007px">Include long/lat coordinates and color for the customer, to be used in maps and planning.</div>
<div class="a" style="left:0;top:176px;white-space:nowrap;line-height:16px;letter-spacing:-0.069px">Hierarchy-like screen type, but next to the grid add the maps component. Next to the form an RSS</div>
<div class="a" style="left:0;top:192px;white-space:nowrap;line-height:16px;letter-spacing:0.088px">component.</div>
<div class="a" style="left:0;top:224px;white-space:nowrap;line-height:16px;letter-spacing:-0.124px">Details should include contact_person, meeting, email, project, BI for sales invoices and sales invoices in</div>
<div class="a" style="left:0;top:240px;white-space:nowrap;line-height:16px;letter-spacing:-0.037px">this order.</div>
<div class="a" style="left:0;top:272px;white-space:nowrap;line-height:16px;letter-spacing:-0.039px">Prefilter for 'my company', based on the current user.</div>
<div class="a" style="left:0;top:304px;white-space:nowrap;line-height:16px;letter-spacing:-0.075px">Prefilter for 'my customers', based on the current user.</div>
<div class="a" style="left:0;top:336px;white-space:nowrap;line-height:16px;letter-spacing:-0.002px">Make sure logo is first in the list, adjust the height of rows to about 5x the regulair height. Icons in the</div>
<div class="a" style="left:0;top:352px;white-space:nowrap;line-height:16px;letter-spacing:-0.016px">form for the groups 'general', 'address' and 'media'.</div>
<div class="a" style="left:0;top:384px;white-space:nowrap;line-height:16px;letter-spacing:-0.009px">Add customers in the menu, and a variant without the list called 'my company' in the menu.</div>
<div class="a" style="left:0;top:416px;white-space:nowrap;line-height:16px;letter-spacing:-0.081px">Reset longitude/latitude when the address changes.</div>
</div>
<!-- v scrollbar -->
<div class="a" style="left:1553px;top:428px;width:17px;height:450px;background:#ececec"></div>
<div class="a" style="left:1553px;top:487px;width:17px;height:374px;background:#c8c8c8"></div>
<svg style="left:1557px;top:433px" width="9" height="6" viewBox="0 0 9 6"><path d="M1 5 L4.5 1.5 L8 5" stroke="#606060" stroke-width="1.6" fill="none"/></svg>
<svg style="left:1557px;top:866px" width="9" height="6" viewBox="0 0 9 6"><path d="M1 1 L4.5 4.5 L8 1" stroke="#606060" stroke-width="1.6" fill="none"/></svg>
<!-- right icons -->
<svg style="left:1584px;top:430px" width="32" height="31" viewBox="0 0 32 31">
 <circle cx="15" cy="2.8" r="2.9" fill="#555"/>
 <path d="M21.5 5.5 L28 11.2" stroke="#555" stroke-width="2.2" stroke-linecap="round"/>
 <path d="M18 4.8 L23.5 5 L26 14 L16.5 19.5 L14.5 18.5 Z M19 9.5 L21.8 13 L17.6 15.8 Z" fill="#555" fill-rule="evenodd"/>
 <path d="M15.8 18.5 Q16 24 17.2 28.6" stroke="#555" stroke-width="2" fill="none" stroke-linecap="round"/>
 <path d="M1 28.6 L1 23.5 L4.4 19 L9 23.6 L14.6 28.6 Z" fill="#5a5a5a"/>
 <path d="M9.5 22.5 L14.3 19.8" stroke="#2f74c9" stroke-width="1.8"/>
 <circle cx="25.3" cy="23.9" r="8.2" fill="#fff"/>
 <circle cx="25.3" cy="23.9" r="7" fill="#4aa57a"/>
 <path d="M20.8 23.8 L24 27 L29.6 21.8" stroke="#fff" stroke-width="2.3" fill="none"/>
</svg>
<svg style="left:1584px;top:473px" width="32" height="32" viewBox="0 0 32 32">
 <circle cx="15.6" cy="3.2" r="3.2" fill="#bdbdbd"/>
 <path d="M20 4.5 L26.6 5 L27.9 16.1 L19 23 L15.4 20.4 L17.6 7.9 Z M19.3 11.4 L21.9 15.3 L18.4 17.4 Z" fill="#bdbdbd" fill-rule="evenodd"/>
 <path d="M25 6 L30.5 12.2" stroke="#bdbdbd" stroke-width="2.6" stroke-linecap="round"/>
 <path d="M18.8 21 V31" stroke="#bdbdbd" stroke-width="3.9" stroke-linecap="round"/>
 <path d="M25.9 19.5 L30.5 30.8" stroke="#bdbdbd" stroke-width="3.5" stroke-linecap="round"/>
 <path d="M0.3 31.6 V26 L3.8 21.3 L8.9 26 L14.5 30.3 L15 31.6 Z" fill="#bdbdbd"/>
 <path d="M9.4 24.7 L14.5 21.9" stroke="#bdbdbd" stroke-width="2.2"/>
</svg>

</body></html>
